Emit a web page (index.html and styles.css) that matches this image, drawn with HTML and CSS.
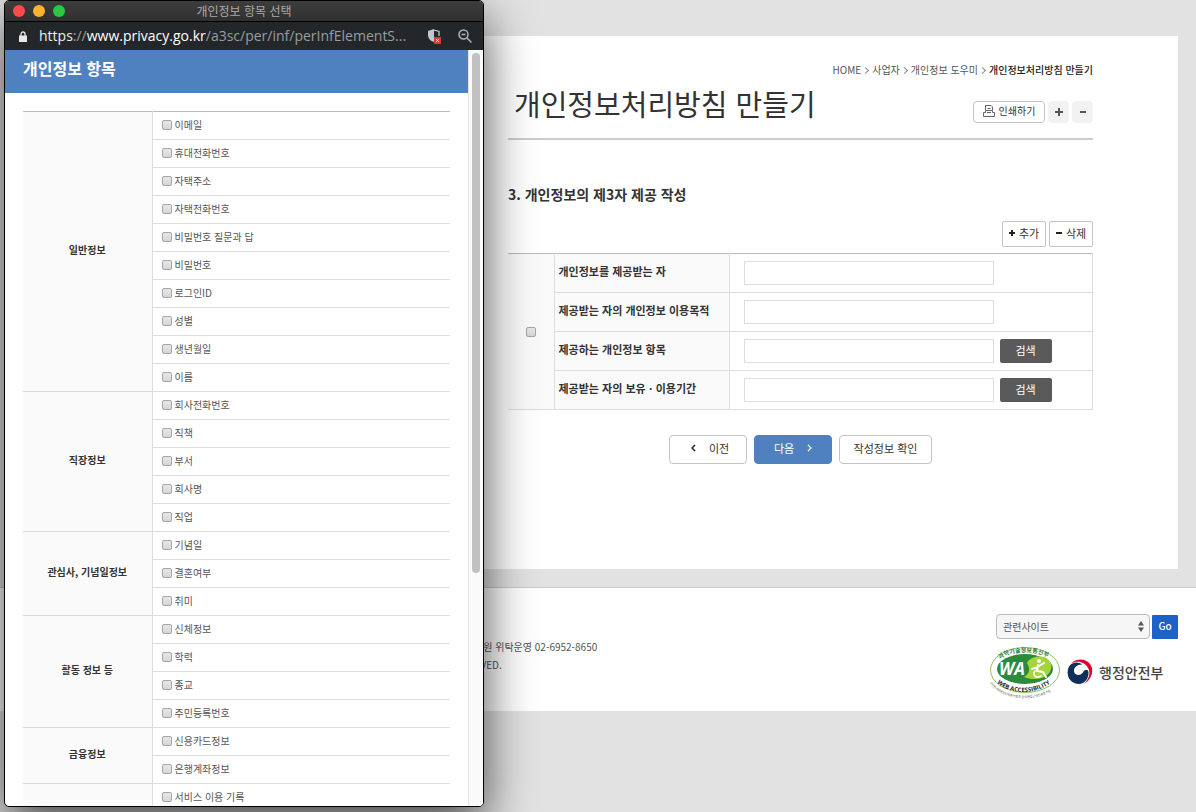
FILE: index.html
```html
<!DOCTYPE html>
<html lang="ko">
	<head>
		<meta charset="UTF-8">
		<meta name="viewport" content="width=device-width, initial-scale=1.0" />
		<title>개인정보처리방침 만들기</title>
		<link rel="stylesheet" href="styles.css">
	</head>
	<body>
		<!-- 본문 -->
		<main class="panel">
			<nav class="location">
				<a href="#">HOME</a>
				<i class="arrow"></i>
				<a href="#">사업자</a>
				<i class="arrow"></i>
				<a href="#">개인정보 도우미</a>
				<i class="arrow"></i>
				<strong>개인정보처리방침 만들기</strong>
			</nav>
			<div class="title">
				<h1>개인정보처리방침 만들기</h1>
				<div class="util">
					<button type="button" class="btn_print">
						<svg width="12" height="12" viewBox="0 0 12 12" fill="none" stroke="#666">
							<path d="M2.5 5V.5h5.500l1.500 1.500v3M4.500 3.500h3M.5 11.500v-4h2v-2h7v2h2v4zM4 7.500h4" />
						</svg>
						인쇄하기
					</button>
					<button type="button" class="btn_size" aria-label="글자 크게">
						<svg width="8" height="8" viewBox="0 0 8 8" stroke="#555" stroke-width="2"><path d="M4 0v8M0 4h8" /></svg>
					</button>
					<button type="button" class="btn_size" aria-label="글자 작게">
						<svg width="8" height="8" viewBox="0 0 8 8" stroke="#555" stroke-width="2"><path d="M1 4h6" /></svg>
					</button>
				</div>
			</div>

			<h2>3. 개인정보의 제3자 제공 작성</h2>
			<form action="" method="get" name="offerForm">
				<div class="edit">
					<button type="button" class="btn_edit">
						<svg width="6" height="6" viewBox="0 0 6 6" stroke="#222" stroke-width="2"><path d="M3 0v6M0 3h6" /></svg>
						추가
					</button>
					<button type="button" class="btn_edit">
						<svg width="6" height="6" viewBox="0 0 6 6" stroke="#222" stroke-width="2"><path d="M0 3h6" /></svg>
						삭제
					</button>
				</div>
				<table class="write">
					<tr>
						<td class="chk" rowspan="4"><input type="checkbox" name="offer_chk" aria-label="선택"></td>
						<th><label for="offer_name">개인정보를 제공받는 자</label></th>
						<td><div class="field"><input type="text" id="offer_name"></div></td>
					</tr>
					<tr>
						<th><label for="offer_purpose">제공받는 자의 개인정보 이용목적</label></th>
						<td><div class="field"><input type="text" id="offer_purpose"></div></td>
					</tr>
					<tr>
						<th><label for="offer_item">제공하는 개인정보 항목</label></th>
						<td><div class="field"><input type="text" id="offer_item"><button type="button" class="btn_search">검색</button></div></td>
					</tr>
					<tr>
						<th><label for="offer_period">제공받는 자의 보유ㆍ이용기간</label></th>
						<td><div class="field"><input type="text" id="offer_period"><button type="button" class="btn_search">검색</button></div></td>
					</tr>
				</table>
				<div class="step">
					<button type="button" class="btn_step prev">
						<svg width="5" height="8" viewBox="0 0 5 8" fill="none" stroke="#222" stroke-width="1.5"><path d="M4 1L1 4l3 3" /></svg>
						이전
					</button>
					<button type="button" class="btn_step next">
						다음
						<svg width="5" height="8" viewBox="0 0 5 8" fill="none" stroke="#fff" stroke-width="1.2"><path d="M1 1l3 3-3 3" /></svg>
					</button>
					<button type="button" class="btn_step confirm">작성정보 확인</button>
				</div>
			</form>
		</main>

		<!-- 하단 -->
		<footer class="footer">
			<address>
				흥원 위탁운영 02-6952-8650<br />
				RVED.
			</address>
			<div class="related">
				<form class="site" action="" method="get">
					<div class="select">
						<select aria-label="관련사이트"><option>관련사이트</option></select>
						<svg width="6" height="11" viewBox="0 0 6 11" fill="#555"><path d="M3 0l3 4.5H0zM3 11L0 6.5h6z" /></svg>
					</div>
					<button type="button" class="btn_go">Go</button>
				</form>
				<div class="marks">
					<svg class="wa" width="72" height="52" viewBox="0 0 72 52">
						<defs>
							<path id="wa_top" d="M11 13C22 4 50 4 61 13" />
							<path id="wa_mid" d="M7 35C18 50 52 50 67 32" />
							<path id="wa_low" d="M1 37C14 57 57 57 71 37" />
						</defs>
						<ellipse cx="36" cy="24" rx="34.5" ry="22.5" fill="#fff" stroke="#8cc657" />
						<ellipse cx="36" cy="23" rx="28" ry="15" fill="#2b8a3c" />
						<path d="M38 17c3-7 16-9 22-3 5 6 2 15-7 18-8 2-13 1-18-1 5-3 7-7 3-14z" fill="#a4d53c" />
						<text x="10" y="29" class="wa_name">WA</text>
						<g fill="none" stroke="#fff" stroke-width="2" stroke-linecap="round">
							<circle cx="50" cy="15" r="1" fill="#fff" />
							<path d="M49 19l-1 6 6 1 3 5M49 21l-6 2M50 20l5-3" />
							<path d="M46 25c-3 4 1 8 6 5" stroke-width="1.5" />
						</g>
						<text class="wa_ko"><textPath href="#wa_top">과학기술정보통신부</textPath></text>
						<text class="wa_en"><textPath href="#wa_mid" startOffset="2">WEB ACCESSIBILITY</textPath></text>
						<text class="wa_sm"><textPath href="#wa_low">(사)한국장애인단체총연합회 한국웹접근성인증평가원</textPath></text>
					</svg>
					<div class="ministry">
						<svg width="26" height="26" viewBox="0 0 26 26">
							<path d="M4 4.500C9-1 19-1 23 5c5 7 1 16-6 20 5-5 7-11 4-16C18 3 10 1 4 4.500z" fill="#e5002b" />
							<path d="M2 7.500C5 3 11 2 15.500 5.500 10 5 6.500 9 7 12.500c.7 4 6 4.500 8.500 1.500 2-4 5.500-4 6-1C22 19 18 25 12 25 3 25-2 16 2 7.500z" fill="#10305c" />
						</svg>
						<span>행정안전부</span>
					</div>
				</div>
			</div>
		</footer>

		<!-- 개인정보 항목 선택 팝업 -->
		<section class="popup">
			<header class="bar">
				<i class="dot red"></i><i class="dot yellow"></i><i class="dot green"></i>
				<span>개인정보 항목 선택</span>
			</header>
			<div class="address">
				<svg width="8" height="11" viewBox="0 0 8 11"><path d="M0 4.500h8V11H0z" fill="#e8e8e8" /><path d="M2 5V3a2 2 0 0 1 4 0v2" fill="none" stroke="#e8e8e8" stroke-width="1.300" /></svg>
				<p>https<em>://</em><b>www.privacy.go.kr</b><em>/a3sc/per/inf/perInfElementS...</em></p>
				<svg width="14" height="15" viewBox="0 0 14 15">
					<path d="M6 0L0 2v4c0 3 2 6 6 7z" fill="#c4c7ca" />
					<path d="M6 1l5 1.500V7" fill="none" stroke="#c4c7ca" stroke-width="1.300" />
					<path d="M6 8h7v7H6z" fill="#d93a30" />
					<path d="M8.200 10.200l2.600 2.600M10.800 10.200l-2.600 2.600" stroke="#fff" />
				</svg>
				<svg width="14" height="14" viewBox="0 0 14 14" fill="none" stroke="#b2b5b8" stroke-width="1.500"><circle cx="5.500" cy="5.500" r="4.500" /><path d="M9 9l4.500 4.500M3.500 5.500h4" /></svg>
			</div>
			<div class="view">
				<div class="doc">
					<h2>개인정보 항목</h2>
					<table class="items">
						<tbody>
							<tr><th rowspan="10">일반정보</th><td><label><input type="checkbox">이메일</label></td></tr>
							<tr><td><label><input type="checkbox">휴대전화번호</label></td></tr>
							<tr><td><label><input type="checkbox">자택주소</label></td></tr>
							<tr><td><label><input type="checkbox">자택전화번호</label></td></tr>
							<tr><td><label><input type="checkbox">비밀번호 질문과 답</label></td></tr>
							<tr><td><label><input type="checkbox">비밀번호</label></td></tr>
							<tr><td><label><input type="checkbox">로그인ID</label></td></tr>
							<tr><td><label><input type="checkbox">성별</label></td></tr>
							<tr><td><label><input type="checkbox">생년월일</label></td></tr>
							<tr><td><label><input type="checkbox">이름</label></td></tr>
						</tbody>
						<tbody>
							<tr><th rowspan="5">직장정보</th><td><label><input type="checkbox">회사전화번호</label></td></tr>
							<tr><td><label><input type="checkbox">직책</label></td></tr>
							<tr><td><label><input type="checkbox">부서</label></td></tr>
							<tr><td><label><input type="checkbox">회사명</label></td></tr>
							<tr><td><label><input type="checkbox">직업</label></td></tr>
						</tbody>
						<tbody>
							<tr><th rowspan="3">관심사, 기념일정보</th><td><label><input type="checkbox">기념일</label></td></tr>
							<tr><td><label><input type="checkbox">결혼여부</label></td></tr>
							<tr><td><label><input type="checkbox">취미</label></td></tr>
						</tbody>
						<tbody>
							<tr><th rowspan="4">활동 정보 등</th><td><label><input type="checkbox">신체정보</label></td></tr>
							<tr><td><label><input type="checkbox">학력</label></td></tr>
							<tr><td><label><input type="checkbox">종교</label></td></tr>
							<tr><td><label><input type="checkbox">주민등록번호</label></td></tr>
						</tbody>
						<tbody>
							<tr><th rowspan="2">금융정보</th><td><label><input type="checkbox">신용카드정보</label></td></tr>
							<tr><td><label><input type="checkbox">은행계좌정보</label></td></tr>
						</tbody>
						<tbody>
							<tr><th></th><td><label><input type="checkbox">서비스 이용 기록</label></td></tr>
						</tbody>
					</table>
				</div>
				<div class="scroll"><i></i></div>
			</div>
		</section>
	</body>
</html>
```
FILE: styles.css
```css
* {
	box-sizing: border-box;
}

body {
	margin: 0;
	min-height: 100vh;
	padding-top: 36px;
	background: #e2e2e2;
	color: #333;
	font: 10px/18px "Noto Sans CJK KR", sans-serif;
	position: relative;
}

h1, h2, p {
	margin: 0;
}

a {
	color: #555;
	text-decoration: none;
}

button, input, select {
	margin: 0;
	font: inherit;
	color: inherit;
}

button {
	display: flex;
	align-items: center;
	justify-content: center;
	padding: 0 0 2px;
	border: 1px solid #c4c4c4;
	border-radius: 2px;
	background: #fff;
}

input[type="checkbox"] {
	appearance: none;
	width: 10px;
	height: 10px;
	border: 1px solid #a6a6a6;
	border-radius: 2px;
	background: linear-gradient(#e8e8e8, #d6d6d6);
}

/* 본문 */
.panel {
	min-height: 533px;
	margin: 0 18px;
	padding: 25px 85px 0 490px;
	background: #fff;
}

.location {
	display: flex;
	align-items: center;
	justify-content: flex-end;
	gap: 2px;
}

.location strong {
	font-weight: 500;
	color: #222;
}

.arrow {
	width: 5px;
	height: 5px;
	margin-right: 2px;
	border: solid #888;
	border-width: 1px 1px 0 0;
	transform: rotate(45deg);
}

.title {
	display: flex;
	justify-content: space-between;
	height: 61px;
	padding-left: 6px;
	border-bottom: 2px solid #ccc;
}

.title h1 {
	font-size: 29px;
	font-weight: 400;
	line-height: 48px;
}

.util {
	display: flex;
	gap: 3px;
	padding-top: 22px;
}

.util button {
	height: 22px;
}

.btn_print {
	gap: 4px;
	width: 72px;
	border-radius: 4px;
}

.util .btn_size {
	width: 21px;
	padding: 0;
	border: 0;
	border-radius: 4px;
	background: #f2f2f2;
}

.panel h2 {
	margin-top: 42px;
	font-size: 14px;
	line-height: 24px;
}

.edit {
	display: flex;
	justify-content: flex-end;
	gap: 3px;
	padding: 15px 0 6px;
}

.btn_edit {
	gap: 4px;
	width: 44px;
	height: 26px;
	font-size: 11px;
}

.write {
	width: 100%;
	border-collapse: collapse;
	border-top: 1px solid #bbb;
	font-size: 11px;
}

.write th, .write td {
	height: 39px;
	padding: 0;
	border: 1px solid #ddd;
	border-top-color: inherit;
}

.write tr + tr th, .write tr + tr td {
	border-top-color: #ddd;
}

.write th {
	width: 175px;
	padding: 0 4px 4px;
	background: #fafafa;
	text-align: left;
}

.write .chk {
	width: 46px;
	padding-bottom: 4px;
	border-left: 0;
	background: #fafafa;
	text-align: center;
}

.chk input {
	vertical-align: middle;
}

.field {
	display: flex;
	align-items: center;
	gap: 6px;
	padding-left: 14px;
}

.field input {
	width: 250px;
	height: 24px;
	border: 1px solid #ddd;
}

.btn_search {
	width: 52px;
	height: 24px;
	border: 0;
	background: #5a5a5a;
	color: #fff;
}

.step {
	display: flex;
	justify-content: center;
	gap: 7px;
	padding: 25px 0 0;
}

.btn_step {
	height: 29px;
	padding-bottom: 3px;
	border-radius: 4px;
	font-size: 11px;
}

.prev, .next {
	gap: 13px;
	width: 78px;
}

.prev {
	padding-left: 4px;
}

.next {
	border-color: #4f81c1;
	background: #4f81c1;
	color: #fff;
}

.confirm {
	width: 93px;
}

/* 하단 */
.footer {
	display: flex;
	justify-content: space-between;
	min-height: 124px;
	margin-top: 18px;
	padding: 26px 18px 0 474px;
	border-top: 1px solid #c8c8c8;
	background: #fff;
}

.footer address {
	padding-top: 24px;
	color: #555;
	font-style: normal;
}

.related {
	width: 189px;
}

.site {
	display: flex;
	justify-content: flex-end;
	gap: 2px;
}

.select {
	display: flex;
	align-items: center;
	width: 154px;
	height: 25px;
	padding-right: 5px;
	border: 1px solid #bbb;
	border-radius: 4px;
	background: #f6f6f6;
}

.select select {
	flex: 1;
	appearance: none;
	padding: 0 6px;
	border: 0;
	background: none;
	color: #555;
}

.btn_go {
	width: 26px;
	height: 24px;
	margin-top: 1px;
	border: 0;
	border-radius: 1px;
	background: #1d62cb;
	color: #fff;
	font-weight: 500;
}

.marks {
	display: flex;
	align-items: center;
	gap: 6px;
	padding-top: 7px;
}

.wa {
	overflow: visible;
}

.wa_name {
	fill: #fff;
	font: italic bold 17px "Open Sans", sans-serif;
}

.wa_ko {
	fill: #2b7a3c;
	font-size: 6px;
	font-weight: bold;
}

.wa_en {
	fill: #222;
	font: bold 6px "Open Sans", sans-serif;
}

.wa_sm {
	fill: #555;
	font-size: 3px;
}

.ministry {
	display: flex;
	align-items: center;
	gap: 6px;
	color: #444;
	font-size: 14px;
	font-weight: 500;
}

/* 팝업 창 */
.popup {
	display: flex;
	flex-direction: column;
	position: absolute;
	top: 0;
	bottom: 5px;
	left: 4px;
	width: 480px;
	overflow: hidden;
	border: 1px solid #000;
	border-radius: 5px;
	background: #fff;
	box-shadow: 0 18px 50px rgba(0, 0, 0, .7);
}

.bar {
	display: flex;
	align-items: center;
	gap: 8px;
	height: 21px;
	padding: 0 8px;
	border-bottom: 1px solid #000;
	background: linear-gradient(#3d3d3d, #303030);
	color: #aaa;
	font-size: 12px;
}

.bar span {
	flex: 1;
	padding-right: 60px;
	text-align: center;
}

.dot {
	width: 12px;
	height: 12px;
	border-radius: 50%;
}

.red { background: #fc4a48; }
.yellow { background: #fdb42c; }
.green { background: #28c840; }

.address {
	display: flex;
	align-items: center;
	height: 28px;
	padding: 0 11px 0 14px;
	background: #23272a;
	color: #eee;
	font: 14px/28px "Open Sans", sans-serif;
}

.address p {
	flex: 1;
	padding-left: 12px;
	white-space: nowrap;
}

.address svg + svg {
	margin-left: 16px;
}

.address em {
	color: #9a9da0;
	font-style: normal;
}

.address b {
	color: #fff;
	font-weight: 500;
}

.view {
	display: flex;
	flex: 1;
	min-height: 0;
}

.doc {
	flex: 1;
	overflow: hidden;
}

.doc h2 {
	height: 43px;
	padding-left: 18px;
	background: #4f81c1;
	color: #fff;
	font-size: 16px;
	line-height: 37px;
}

.items {
	width: 427px;
	margin: 18px;
	border-collapse: collapse;
	border-top: 1px solid #bbb;
	color: #555;
}

.items th, .items td {
	height: 28px;
	padding: 0 0 2px;
	border-bottom: 1px solid #ddd;
}

.items th {
	width: 129px;
	padding-bottom: 4px;
	border-right: 1px solid #ddd;
	background: #fafafa;
	color: #333;
}

.items td {
	padding-left: 9px;
}

.items label {
	display: flex;
	align-items: center;
	gap: 3px;
}

.scroll {
	width: 15px;
	padding: 3px 3px 0;
	border-left: 1px solid #e3e3e3;
	background: #fafafa;
}

.scroll i {
	display: block;
	width: 8px;
	height: 69%;
	border-radius: 4px;
	background: #c1c1c1;
}
```
